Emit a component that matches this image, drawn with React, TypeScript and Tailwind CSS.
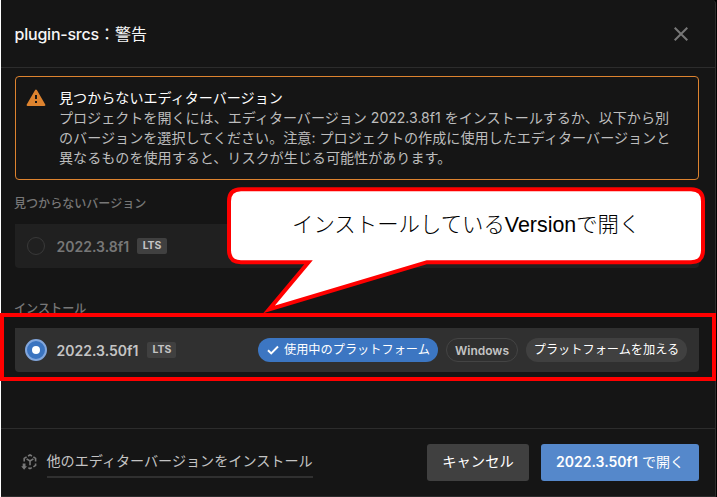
import React from "react";

const ui = "font-['Inter','Noto_Sans_CJK_JP',sans-serif]";

function LtsBadge({ className }: { className: string }) {
  return (
    <span className={`flex h-4 items-center justify-center rounded-[2px] pt-px text-[10.5px] font-bold leading-none ${className}`}>
      LTS
    </span>
  );
}

function Header() {
  return (
    <header className="flex h-[68px] items-center justify-between border-b border-[#2c2c2c] pl-[13.5px] pr-[27px]">
      <h1 className="whitespace-nowrap text-[16px] font-medium leading-6 tracking-[-0.22px] text-[#f5f5f5]">
        plugin-srcs<span className="font-normal tracking-normal">：警告</span>
      </h1>
      <svg width="14" height="14" viewBox="0 0 14 14" className="stroke-[#777777]" strokeWidth="2">
        <path d="M0.7 0.7 13.3 13.3M13.3 0.7 0.7 13.3" />
      </svg>
    </header>
  );
}

function Warning() {
  return (
    <section className="mt-2 flex h-[104px] rounded border border-[#dd832f] pl-[10px] pt-[11px]">
      <svg width="20" height="18" viewBox="0 0 20 18" className="mt-[1px] shrink-0">
        <path d="M10 1.6 18.4 16H1.6Z" fill="#dd832f" stroke="#dd832f" strokeWidth="2" strokeLinejoin="round" />
        <path d="M9 6h2v4H9zM9 12h2v2H9z" fill="#151515" />
      </svg>
      <div className="ml-[13px] whitespace-nowrap text-[14.08px] leading-5 text-[#bdbdbd]">
        <p className="text-white">見つからないエディターバージョン</p>
        <p className="tracking-[-0.02px]">プロジェクトを開くには、エディターバージョン 2022.3.8f1 をインストールするか、以下から別</p>
        <p className="tracking-[0.01px]">のバージョンを選択してください。注意: プロジェクトの作成に使用したエディターバージョンと</p>
        <p>異なるものを使用すると、リスクが生じる可能性があります。</p>
      </div>
    </section>
  );
}

function Footer() {
  return (
    <footer className="flex h-[69px] items-center border-y border-[#2c2c2c] pl-[20px] pr-[16px]">
      <svg width="16" height="17" viewBox="0 0 16 17" fill="none" className="stroke-[#777777]" strokeWidth="1.6">
        <path d="M3.2 7.5V4.4L5.6 2.9M7 2 9 1l2 1M12.4 2.9 14.6 4.4V7.5M14.6 9.5v1.8L12.4 12.8M10.8 13.6 9 14.6 7.4 13.7M5.6 4.8 9 7l3.4-2.2M9 7v4.2" />
        <path d="M1.7 9.5h2.8v2.7H6L3.1 15.8.2 12.2h1.5z" className="fill-[#777777]" stroke="none" />
      </svg>
      <a className="ml-[9.5px] flex h-[32px] -translate-y-px items-center whitespace-nowrap border-b-2 border-[#303030] text-[14.1px] leading-5 text-[#c4c4c4]">
        他のエディターバージョンをインストール
      </a>
      <button className="ml-auto flex h-[37px] w-[102px] items-center justify-center rounded-[3px] bg-[#404040] pb-px text-[14.3px] text-white">
        キャンセル
      </button>
      <button className="ml-3 flex h-[37px] w-[158px] items-center justify-center whitespace-nowrap rounded-[3px] bg-[#5588cb] pb-[2px] text-[14px] font-semibold text-white">
        2022.3.50f1<span className="ml-1 font-normal">で開く</span>
      </button>
    </footer>
  );
}

export default function App() {
  return (
    <div className="relative h-[497px] w-[717px] overflow-hidden bg-black">
      <div className={`flex h-full w-[716px] flex-col rounded-tr-[4px] border-l border-r border-l-white border-r-[#2c2c2c] bg-[#151515] ${ui}`}>
        <Header />
        <main className="flex flex-1 flex-col pl-[14px] pr-[16px]">
          <Warning />
          <h2 className="mt-[14px] h-5 -translate-x-px whitespace-nowrap text-[12.05px] font-medium leading-5 text-[#777777]">見つからないバージョン</h2>
          <div className="mt-[10px] flex h-11 items-center rounded-b-[4px] bg-[#202020] pl-3">
            <span className="h-[18px] w-[18px] rounded-full border border-[#393939]" />
            <span className="ml-[11.5px] text-[14px] font-semibold text-[#777777]">2022.3.8f1</span>
            <LtsBadge className="ml-2 w-[30px] bg-[#404040] text-[#c4c4c4]" />
          </div>
          <h2 className="mt-[30px] h-5 -translate-x-px whitespace-nowrap text-[12.1px] font-medium leading-[22px] text-[#777777]">インストール</h2>
          <div className="mt-[10px] flex h-11 items-center rounded-b-[4px] bg-[#303030] pl-[10px] pr-3">
            <span className="flex h-[22px] w-[22px] items-center justify-center rounded-full border-2 border-[#82a6dc] bg-[#3b74c0]">
              <span className="h-2 w-2 rounded-full bg-white" />
            </span>
            <span className="ml-[9.5px] text-[14px] font-semibold text-[#c4c4c4]">2022.3.50f1</span>
            <LtsBadge className="ml-[9px] w-[29px] bg-[#404040] text-[#c4c4c4]" />
            <div className="ml-auto flex gap-2 whitespace-nowrap text-[12px] leading-6">
              <span className="flex h-6 w-[180px] items-center rounded-full bg-[#3c76c2] pl-[9px] text-[12.2px] text-white">
                <svg width="12" height="10" viewBox="0 0 12 10" fill="none" stroke="white" strokeWidth="2" className="mr-[5px]">
                  <path d="M1 5.3 4.2 8.4 11 1.5" />
                </svg>
                使用中のプラットフォーム
              </span>
              <span className="flex h-6 w-[72px] items-center justify-center rounded-full border border-[#444444] pt-px font-semibold text-[#c4c4c4]">
                Windows
              </span>
              <span className="flex h-6 w-[161px] items-center justify-center rounded-full bg-[#404040] text-[12.2px] text-white">
                プラットフォームを加える
              </span>
            </div>
          </div>
        </main>
        <Footer />
      </div>

      {/* Highlight around the installed editor */}
      <div className="absolute left-0 top-[313px] h-[68px] w-[716px] border-4 border-[#ff0000]" />

      {/* Speech bubble pointing at the highlight */}
      <svg className="absolute left-0 top-0" width="717" height="497" viewBox="0 0 717 497">
        <path
          d="M241 189.2H691Q703 189.2 703 201.2V250.2Q703 262.2 691 262.2H427L269 309.5 308.5 262.2H241Q229 262.2 229 250.2V201.2Q229 189.2 241 189.2Z"
          fill="white"
          stroke="#ff0000"
          strokeWidth="4"
          strokeMiterlimit="10"
        />
      </svg>
      <p className="absolute left-[292px] top-[209px] whitespace-nowrap font-['Liberation_Sans','Noto_Sans_CJK_JP',sans-serif] text-[21.4px] font-light leading-8 text-black">
        インストールしているVersionで開く
      </p>
    </div>
  );
}
